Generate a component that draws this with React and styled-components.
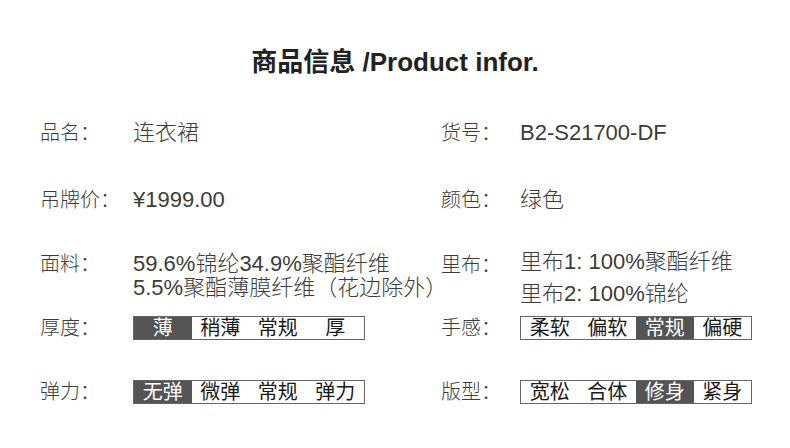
import React from 'react';
import styled, { createGlobalStyle } from 'styled-components';

const GlobalStyle = createGlobalStyle`
  html, body {
    margin: 0;
    padding: 0;
    background: #fff;
  }
  body {
    font-family: "Liberation Sans", "Noto Sans CJK SC", sans-serif;
  }
`;

const Page = styled.main`
  width: 790px;
  height: 448px;
  overflow: hidden;
  background: #fff;
`;

const Title = styled.h1`
  margin: 46px 0 0;
  height: 32px;
  line-height: 32px;
  font-size: 26px;
  font-weight: 700;
  text-align: center;
  color: #222;
`;

const Row = styled.div`
  display: grid;
  grid-template-columns: 401px 1fr;
  padding-left: 40px;
  margin-top: ${p => p.$gap}px;
  align-items: ${p => (p.$center ? 'center' : 'start')};
`;

const Cell = styled.div`
  display: flex;
  align-items: ${p => (p.$center ? 'center' : 'flex-start')};
`;

const Label = styled.span`
  flex: none;
  width: ${p => p.$width}px;
  padding-top: ${p => p.$top || 0}px;
  font-size: 20px;
  line-height: 24px;
  font-weight: 300;
  color: #3c3c3c;
  white-space: nowrap;
`;

const Value = styled.div`
  font-size: 22px;
  line-height: ${p => p.$lh || 24}px;
  padding-top: ${p => p.$top || 0}px;
  font-weight: 300;
  color: #3c3c3c;
  white-space: nowrap;
`;

const Scale = styled.div`
  display: flex;
  width: 230px;
  height: 22px;
  border: 1px solid #666;
`;

const Option = styled.span`
  flex: 1;
  display: flex;
  align-items: center;
  justify-content: center;
  font-size: 20px;
  line-height: 22px;
  font-weight: 400;
  background: ${p => (p.$on ? '#545454' : '#fff')};
  color: ${p => (p.$on ? '#fff' : '#1a1a1a')};
`;

function Pick({ options, active }) {
  return (
    <Scale>
      {options.map(o => (
        <Option key={o} $on={o === active}>
          {o}
        </Option>
      ))}
    </Scale>
  );
}

export default function App() {
  return (
    <Page>
      <GlobalStyle />
      <Title>商品信息 /Product infor.</Title>

      <Row $gap={43}>
        <Cell>
          <Label $width={93}>品名：</Label>
          <Value>连衣裙</Value>
        </Cell>
        <Cell>
          <Label $width={79}>货号：</Label>
          <Value>B2-S21700-DF</Value>
        </Cell>
      </Row>

      <Row $gap={43}>
        <Cell>
          <Label $width={93}>吊牌价：</Label>
          <Value>¥1999.00</Value>
        </Cell>
        <Cell>
          <Label $width={79}>颜色：</Label>
          <Value>绿色</Value>
        </Cell>
      </Row>

      <Row $gap={34}>
        <Cell>
          <Label $width={93} $top={6}>面料：</Label>
          <Value $top={6}>
            59.6%锦纶34.9%聚酯纤维
            <br />
            5.5%聚酯薄膜纤维（花边除外）
          </Value>
        </Cell>
        <Cell>
          <Label $width={79} $top={7}>里布：</Label>
          <Value $lh={32}>
            里布1: 100%聚酯纤维
            <br />
            里布2: 100%锦纶
          </Value>
        </Cell>
      </Row>

      <Row $gap={6} $center>
        <Cell $center>
          <Label $width={93}>厚度：</Label>
          <Pick options={['薄', '稍薄', '常规', '厚']} active="薄" />
        </Cell>
        <Cell $center>
          <Label $width={79}>手感：</Label>
          <Pick options={['柔软', '偏软', '常规', '偏硬']} active="常规" />
        </Cell>
      </Row>

      <Row $gap={40} $center>
        <Cell $center>
          <Label $width={93}>弹力：</Label>
          <Pick options={['无弹', '微弹', '常规', '弹力']} active="无弹" />
        </Cell>
        <Cell $center>
          <Label $width={79}>版型：</Label>
          <Pick options={['宽松', '合体', '修身', '紧身']} active="修身" />
        </Cell>
      </Row>
    </Page>
  );
}
